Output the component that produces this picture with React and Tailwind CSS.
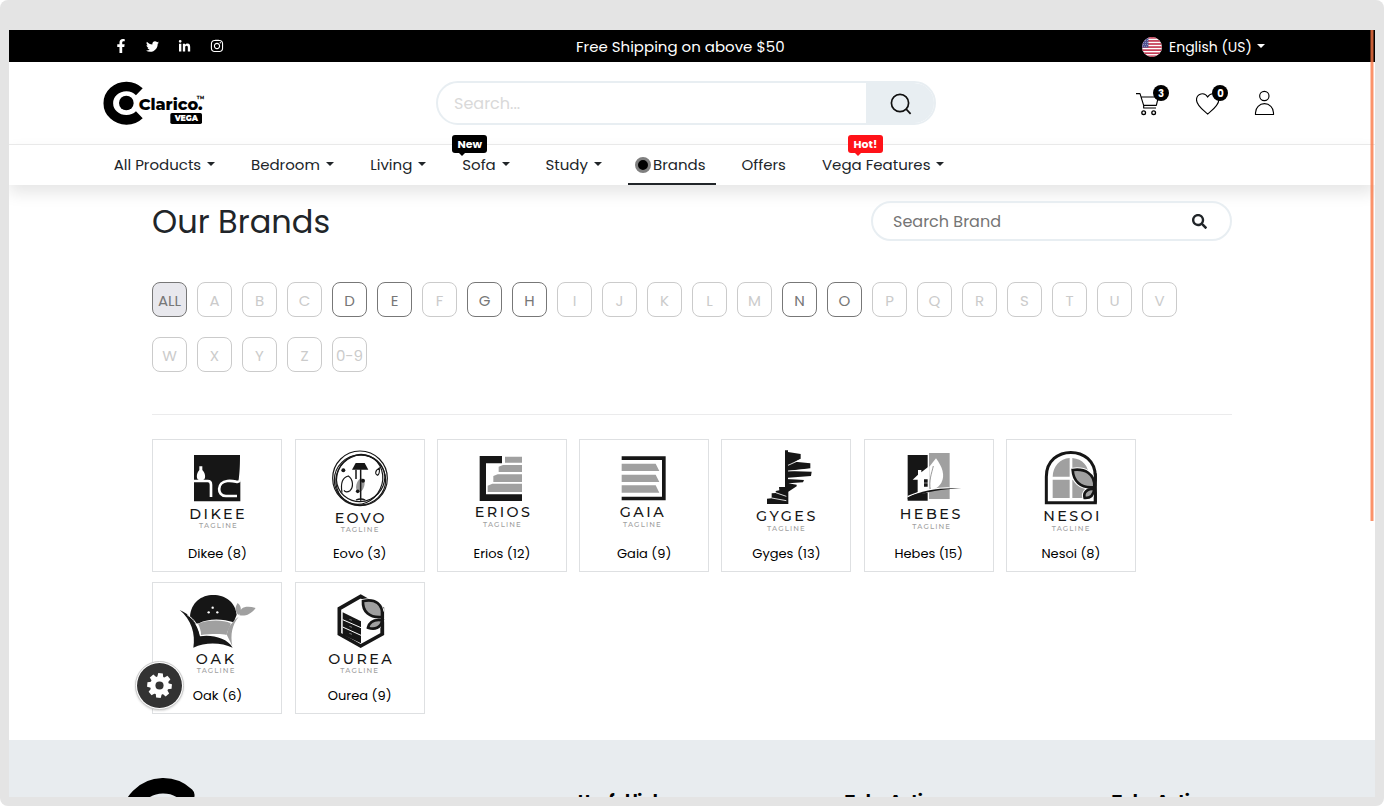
import React from "react";
import { FaFacebookF, FaTwitter, FaLinkedinIn, FaInstagram, FaSearch } from "react-icons/fa";

const INK = "#161616";
const GREY = "#a0a0a0";

function Caret() {
  return (
    <span className="mt-[-2px] block h-0 w-0 shrink-0 border-x-4 border-t-4 border-x-transparent border-t-current" />
  );
}

function ClaricoLogo() {
  return (
    <svg className="h-[46px] w-[104px]" viewBox="306 240 312 138">
      <path d="M418 275A54 50 0 1 0 418 344" fill="none" stroke="#000" strokeWidth="29" strokeLinejoin="round" />
      <circle cx="379" cy="309" r="22" />
      <text x="416" y="330" fontFamily="Montserrat, Poppins, sans-serif" fontWeight="800" fontSize="50" textLength="192" lengthAdjust="spacingAndGlyphs">
        Clarico.
      </text>
      <text x="590" y="306" fontFamily="Montserrat, Poppins, sans-serif" fontWeight="700" fontSize="26" textLength="24" lengthAdjust="spacingAndGlyphs">
        ™
      </text>
      <rect x="511" y="339" width="95" height="33" rx="5" />
      <text x="524" y="364" fill="#fff" fontFamily="Montserrat, Poppins, sans-serif" fontWeight="900" fontSize="25" textLength="70" lengthAdjust="spacingAndGlyphs">
        VEGA
      </text>
    </svg>
  );
}

function Flag() {
  return (
    <svg className="h-5 w-5" viewBox="0 0 20 20">
      <clipPath id="flagClip">
        <circle cx="10" cy="10" r="10" />
      </clipPath>
      <g clipPath="url(#flagClip)">
        <rect width="20" height="20" fill="#fff" />
        {[0, 1, 2, 3, 4, 5, 6].map((i) => (
          <rect key={i} y={i * 3.07} width="20" height="1.7" fill="#c43a54" />
        ))}
        <rect width="6.4" height="10.6" fill="#4f5190" />
        <path d="M1 3.5h5M1 5.5h5M1 7.5h5M3 1.5h3M0 9.3h5" stroke="#a9a9cf" strokeWidth=".7" strokeDasharray="1 1" />
      </g>
    </svg>
  );
}

function TopBar() {
  return (
    <div className="flex h-8 shrink-0 items-center bg-black text-white">
      <div className="ml-[105px] flex w-[462px] items-center">
        <FaFacebookF className="h-[14px] w-[14px]" />
        <FaTwitter className="ml-[18px] h-[13px] w-[13px]" />
        <FaLinkedinIn className="ml-[19px] h-[13px] w-[13px]" />
        <FaInstagram className="ml-[19px] h-[14px] w-[14px]" />
      </div>
      <div className="w-[566px] pt-[2px] text-[15px]">Free Shipping on above $50</div>
      <div className="flex items-center pt-[2px]">
        <Flag />
        <span className="ml-[7px] w-[88px] text-[14px] whitespace-nowrap">English (US)</span>
        <Caret />
      </div>
    </div>
  );
}

function Header() {
  return (
    <div className="flex h-[82px] shrink-0 items-center">
      <div className="ml-[93px] w-[334px]">
        <ClaricoLogo />
      </div>
      <div className="flex h-11 w-[500px] overflow-hidden rounded-full border-2 border-[#e8eef2]">
        <div className="flex flex-1 items-center pt-[2px] pl-4 text-[16px] text-[#d9d9d9]">Search...</div>
        <div className="flex w-[68px] items-center justify-center bg-[#e8eef2] pt-px pl-[2px]">
          <svg className="h-[22px] w-[22px]" viewBox="0 0 22 22" fill="none" stroke="#111" strokeWidth="1.7">
            <circle cx="10" cy="10" r="8.6" />
            <path d="M16.2 16.2L20.6 20.800" />
          </svg>
        </div>
      </div>
      <div className="ml-[200px] flex items-center">
        <div className="relative">
          <svg className="h-[30px] w-6" viewBox="588 264 72 90" fill="none" stroke="#000" strokeWidth="3.4">
            <path d="M588 281H600L611 316H649L655 291H603M611 316V324H648" strokeLinejoin="round" />
            <circle cx="611" cy="338" r="5.500" strokeWidth="4" />
            <circle cx="641" cy="338" r="5.500" strokeWidth="4" />
          </svg>
          <span className="absolute top-[-3px] left-[17px] flex h-4 w-4 items-center justify-center rounded-full bg-black text-[10px] font-bold text-white">
            3
          </span>
        </div>
        <div className="relative ml-9">
          <svg className="h-[30px] w-6" viewBox="768 264 72 90" fill="none" stroke="#000" strokeWidth="3.4">
            <path d="M803 342C790 331 769 317 769.500 299C770 281 793 274 803 291C813 274 836 281 836.500 299C837 317 816 331 803 342Z" />
          </svg>
          <span className="absolute top-[-3px] left-[16.4px] flex h-4 w-4 items-center justify-center rounded-full bg-black text-[10px] font-bold text-white">
            0
          </span>
        </div>
        <svg className="ml-[34px] h-[30px] w-[21px]" viewBox="942 264 63 90" fill="none" stroke="#000" strokeWidth="3.4">
          <circle cx="973" cy="288" r="14" />
          <path d="M946.500 343.500V338A27 27 0 0 1 1000.500 338V343.500Z" />
        </svg>
      </div>
    </div>
  );
}

function NavItem({ label, width, spacing, caret = true, children }) {
  return (
    <div className={`relative flex items-center ${spacing}`}>
      {children}
      <span className={`whitespace-nowrap ${width}`}>{label}</span>
      {caret && (
        <span className="ml-[6px]">
          <Caret />
        </span>
      )}
    </div>
  );
}

function Tag({ text, box, tail }) {
  return (
    <span className={`absolute top-[-10px] flex h-[18px] w-[35px] items-center justify-center rounded-[3px] text-[11px] font-bold text-white ${box}`}>
      {text}
      <span className={`absolute top-[18px] left-[7px] border-x-[3px] border-t-[3px] border-x-transparent ${tail}`} />
    </span>
  );
}

function Nav() {
  return (
    <div className="flex h-[41px] shrink-0 items-stretch border-t border-[#e9e9e9] bg-white pl-[104.7px] text-[15px] text-[#212529] shadow-[0_8px_16px_rgba(0,0,0,0.1)]">
      <NavItem label="All Products" width="w-[87px]" spacing="" />
      <NavItem label="Bedroom" width="w-[69px]" spacing="ml-[36.3px]" />
      <NavItem label="Living" width="w-[42px]" spacing="ml-[36.3px]" />
      <NavItem label="Sofa" width="w-[33.7px]" spacing="ml-9">
        <Tag text="New" box="left-[-10px] bg-black" tail="border-t-black" />
      </NavItem>
      <NavItem label="Study" width="w-[42.5px]" spacing="ml-[35.5px]" />
      <div className="ml-[26px] flex w-[88px] items-center border-b-2 border-[#212529] pt-[2px] pl-[7px]">
        <span className="h-4 w-4 rounded-full border-[3px] border-[#808080] bg-black" />
        <span className="ml-[2px] whitespace-nowrap">Brands</span>
      </div>
      <NavItem label="Offers" width="w-[44.5px]" spacing="ml-[25.5px]" caret={false} />
      <NavItem label="Vega Features" width="w-[108px]" spacing="ml-9">
        <Tag text="Hot!" box="left-[26px] bg-[#ff1218]" tail="border-t-[#ff1218]" />
      </NavItem>
    </div>
  );
}

const LETTERS = ["ALL", ..."ABCDEFGHIJKLMNOPQRSTUVWXYZ".split(""), "0-9"];
const ACTIVE = ["D", "E", "G", "H", "N", "O"];

function LetterFilter() {
  return (
    <div className="mt-10 flex w-[1030px] flex-wrap gap-x-[10px] gap-y-5 text-[15px]">
      {LETTERS.map((l) => {
        const tone =
          l === "ALL"
            ? "border-[#777] bg-[#e8e8ed] text-[#777]"
            : ACTIVE.includes(l)
              ? "border-[#777] text-[#777]"
              : "border-[#cbcbcb] text-[#cbcbcb]";
        return (
          <div key={l} className={`flex h-[35px] w-[35px] items-center justify-center rounded-lg border pt-[3px] whitespace-nowrap ${tone}`}>
            {l}
          </div>
        );
      })}
    </div>
  );
}

function Wordmark({ name, x, y, w, tx, ty }) {
  return (
    <>
      <text x={x} y={y} fill={INK} fontFamily="Montserrat, Poppins, sans-serif" fontWeight="500" fontSize="43" textLength={w}>
        {name}
      </text>
      <text x={tx} y={ty} fill={GREY} fontFamily="Montserrat, Poppins, sans-serif" fontWeight="500" fontSize="21" textLength="113">
        TAGLINE
      </text>
    </>
  );
}

const BRANDS = [
  {
    name: "Dikee", count: 8, box: "39 30 384 300",
    art: (
      <>
        <path d="M162 75H300C300 110 299 125 296 150H301V214H162Z" fill={INK} />
        <path d="M162 153H203Q213 153 213 164V201M300 150Q298 157 288 155Q275 152 262 153C230 156 230 198 258 198H291" fill="none" stroke="#fff" strokeWidth="8" />
        <path d="M178 109H187V120C198 131 198 150 188 150H178C168 150 168 131 178 120Z" fill="#fff" />
        <Wordmark name="DIKEE" x={148} y={266} w={166} tx={177} ty={293} />
      </>
    ),
  },
  {
    name: "Eovo", count: 3, box: "468 30 384 300",
    art: (
      <>
        <g fill="none" stroke={INK} strokeWidth="3.500">
          <circle cx="660" cy="145" r="82" />
          <ellipse cx="660" cy="150" rx="77" ry="75" />
          <ellipse cx="658" cy="148" rx="69" ry="76" transform="rotate(25 658 148)" />
          <ellipse cx="662" cy="145" rx="73" ry="69" transform="rotate(-25 662 145)" />
          <path d="M606 188C602 165 606 143 625 138C640 148 641 171 630 182Q618 190 612 181" />
          <path d="M712 136C704 132 705 122 718 114C719 125 718 134 712 136" />
        </g>
        <ellipse cx="661" cy="166" rx="12" ry="21" fill="#999" transform="rotate(15 661 166)" />
        <path d="M647 99H674L685 119H636Z" fill={INK} />
        <path d="M662 118V212M648 119V147" stroke={INK} strokeWidth="4.500" fill="none" />
        <path d="M648 210Q662 204 676 210" stroke={INK} strokeWidth="4" fill="none" />
        <circle cx="610" cy="121" r="6" fill={INK} />
        <circle cx="669" cy="152" r="6" fill={INK} />
        <circle cx="653" cy="184" r="5.500" fill={INK} />
        <Wordmark name="EOVO" x={584} y={278} w={150} tx={602} ty={305} />
      </>
    ),
  },
  {
    name: "Erios", count: 12, box: "25 30 384 300",
    art: (
      <>
        <path d="M217 78V100H169V193H277V213H150V78Z" fill={INK} />
        <path d="M226 80H277V98H226ZM207 110L220 105H277V126H207ZM191 138L204 133H277V156H191ZM174 167L188 161H277V186H174Z" fill={GREY} />
        <Wordmark name="ERIOS" x={135} y={262} w={166} tx={160} ty={290} />
      </>
    ),
  },
  {
    name: "Gaia", count: 9, box: "451 30 384 300",
    art: (
      <>
        <path d="M576 79H708V211H576V200H697V90H576Z" fill={INK} />
        <path d="M576 101H678L689 123H576ZM576 134H678L689 156H576ZM576 166H678L689 188H576Z" fill={GREY} />
        <Wordmark name="GAIA" x={570} y={262} w={132} tx={580} ty={290} />
      </>
    ),
  },
  {
    name: "Gyges", count: 13, box: "21 30 384 300",
    art: (
      <>
        <path d="M210 61H219V66L257 72V86L221 104L240 95L286 100V115L219 123L290 125L288 138L219 143V147L267 150L264 157L220 160L245 164V169L220 185V222H156V206L170 205V190L183 189L182 183L193 181L192 171H210Z" fill={INK} />
        <path d="M219 106L257 89M219 123L286 118M219 146L268 145M170 204L214 212M182 188L214 199" stroke="#fff" strokeWidth="2.500" />
        <Wordmark name="GYGES" x={123} y={274} w={178} tx={156} ty={302} />
      </>
    ),
  },
  {
    name: "Hebes", count: 15, box: "450 30 384 300",
    art: (
      <>
        <path d="M578 75H638V212H578Z" fill={INK} />
        <path d="M642 69H704V207H642Z" fill={GREY} />
        <path d="M593 149L609 134V120H619V127L642 109V188L608 191V149Z" fill="#fff" />
        <path d="M643 181V110L663 85C682 111 691 136 679 158C670 173 657 179 643 181Z" fill="#fff" />
        <path d="M646 180C641 151 650 130 655 108" fill="none" stroke="#666" strokeWidth="2" />
        <path d="M627 148H638V158H627ZM627 160H638V170H627Z" fill={INK} />
        <path d="M578 200C620 179 675 173 704 174" fill="none" stroke="#fff" strokeWidth="4" />
        <path d="M578 203C620 180 675 172 739 175C680 179 638 182 578 208Z" fill={INK} />
        <Wordmark name="HEBES" x={554} y={268} w={182} tx={592} ty={296} />
      </>
    ),
  },
  {
    name: "Nesoi", count: 8, box: "876 30 384 300",
    art: (
      <>
        <path d="M994 218V140C994 43 1141 43 1141 140V218Z" fill="#fff" stroke={INK} strokeWidth="9" />
        <path d="M1013 140C1014 109 1034 86 1064 84V140ZM1072 84C1104 87 1120 108 1123 140H1072ZM1013 149H1064V204H1013ZM1072 149H1123V204H1072Z" fill={GREY} />
        <path d="M1073 120C1108 115 1140 130 1138 171C1094 176 1075 151 1073 120ZM1138 176C1116 176 1104 187 1109 204C1127 205 1136 196 1138 176Z" fill={GREY} stroke="#fff" strokeWidth="14" />
        <path d="M1073 120C1108 115 1140 130 1138 171C1094 176 1075 151 1073 120ZM1138 176C1116 176 1104 187 1109 204C1127 205 1136 196 1138 176Z" fill={GREY} stroke={INK} strokeWidth="8" />
        <path d="M1141 130V218" stroke={INK} strokeWidth="9" />
        <Wordmark name="NESOI" x={985} y={273} w={168} tx={1010} ty={302} />
      </>
    ),
  },
  {
    name: "Oak", count: 6, box: "69 24 384 300",
    art: (
      <>
        <path d="M180 126C183 82 214 60 250 60C286 60 317 82 320 119L311 142C280 131 235 129 207 145L196 146Z" fill={INK} />
        <path d="M204 146C236 133 280 134 302 145C302 155 292 165 290 180C272 175 235 178 213 180C213 165 209 157 204 146Z" fill={GREY} />
        <path d="M149 105C178 116 202 145 210 184C245 178 292 189 308 218C275 203 228 200 190 218C197 178 184 133 149 105Z" fill={INK} />
        <path d="M326 125C298 146 291 166 291 181L307 213C301 177 306 151 326 125ZM325 120C312 105 317 94 323 84C337 96 334 110 325 120ZM328 121C328 96 348 91 377 99C362 119 346 124 328 121Z" fill={GREY} />
        <path d="M172 120C192 132 205 150 212 181" fill="none" stroke="#fff" strokeWidth="3" />
        <g fill="#fff">
          <circle cx="248" cy="98" r="3.500" />
          <circle cx="236" cy="112" r="3.500" />
          <circle cx="262" cy="112" r="3.500" />
        </g>
        <Wordmark name="OAK" x={197} y={266} w={115} tx={200} ty={294} />
      </>
    ),
  },
  {
    name: "Ourea", count: 9, box: "498 24 384 300",
    art: (
      <>
        <path d="M692 64L757 101V177L692 213L628 177V101Z" fill="#fff" stroke={INK} strokeWidth="11" />
        <path d="M638 112L693 139V205L638 179Z" fill={INK} />
        <path d="M638 134L693 158M638 156L693 181" stroke="#fff" strokeWidth="3" />
        <path d="M658 133l8 3M658 154l8 3M658 175l8 3" stroke="#aaa" strokeWidth="2" />
        <path d="M699 78C735 70 760 86 757 126C717 130 697 108 699 78ZM758 136C733 132 718 141 714 158C735 166 751 158 758 136Z" fill={GREY} stroke="#fff" strokeWidth="13" />
        <path d="M699 78C735 70 760 86 757 126C717 130 697 108 699 78ZM758 136C733 132 718 141 714 158C735 166 751 158 758 136Z" fill={GREY} stroke={INK} strokeWidth="8" />
        <path d="M757 110V179" stroke={INK} strokeWidth="10" />
        <Wordmark name="OUREA" x={595} y={266} w={190} tx={631} ty={295} />
      </>
    ),
  },
];

function BrandGrid() {
  return (
    <div className="mt-[24.2px] ml-[0.45px] flex flex-wrap gap-x-[12.25px] gap-y-[10px]">
      {BRANDS.map((b) => (
        <div key={b.name} className="flex h-[132.5px] w-[130px] flex-col items-center border border-[#dee0e2]">
          <svg className="h-[100px] w-[128px] shrink-0" viewBox={b.box}>
            {b.art}
          </svg>
          <div className="mt-[3.5px] text-[13px] leading-5 whitespace-nowrap text-black">
            {b.name} ({b.count})
          </div>
        </div>
      ))}
    </div>
  );
}

const COG_TEETH = [0, 45, 90, 135];

function SettingsButton() {
  return (
    <div className="absolute top-[631px] left-[125.5px] flex h-[49px] w-[49px] items-center justify-center rounded-full border border-[#c8c8c8] bg-white shadow-[0_1px_2px_rgba(0,0,0,0.15)]">
      <div className="flex h-[45px] w-[45px] items-center justify-center rounded-full bg-[#333]">
        <svg className="h-[25px] w-[25px]" viewBox="-12 -12 24 24" fill="#fff">
          {COG_TEETH.map((a) => (
            <path key={a} d="M-2.900 -8L-2.200 -11.800H2.200L2.900 -8V8L2.200 11.800H-2.200L-2.900 8Z" transform={`rotate(${a + 5})`} />
          ))}
          <circle r="9" />
          <circle r="3.900" fill="#333" />
        </svg>
      </div>
    </div>
  );
}

function Footer() {
  return (
    <div className="flex h-[57px] shrink-0 overflow-hidden bg-[#e8ecef] text-[17px] font-bold text-black">
      <svg className="mt-[36px] ml-[115px] h-[96px] w-[454px] shrink-0" viewBox="0 0 454 96">
        <path d="M62.800 19.100A34.500 34.500 0 1 0 62.800 69.500" fill="none" stroke="#000" strokeWidth="15.500" strokeLinecap="round" />
      </svg>
      <div className="mt-[49px] w-[267px] shrink-0 leading-6 tracking-[-0.5px]">Useful links</div>
      <div className="mt-[49px] w-[267px] shrink-0 leading-6 tracking-[-0.4px]">Take Action</div>
      <div className="mt-[49px] shrink-0 leading-6 tracking-[-0.4px]">Take Action</div>
    </div>
  );
}

export default function App() {
  return (
    <div className="h-[806px] w-[1384px] overflow-hidden rounded-lg bg-[#e4e4e4] px-[9px] pt-[30px] pb-[9px] font-['Poppins',Inter,sans-serif]">
      <div className="relative flex h-full flex-col overflow-hidden bg-white">
        <TopBar />
        <Header />
        <Nav />
        <main className="h-[555px] shrink-0 pr-[143px] pl-[143px]">
          <div className="flex items-start justify-between pt-4">
            <h1 className="pt-[1px] text-[32px] leading-10 whitespace-nowrap text-[#212529]">Our Brands</h1>
            <div className="flex h-10 w-[361px] items-center justify-between rounded-full border-2 border-[#e8eef2] pr-[23px] pl-5 text-[16px] text-[#757575]">
              <span className="pt-[2px]">Search Brand</span>
              <FaSearch className="h-[15px] w-[15px] text-[#212529]" />
            </div>
          </div>
          <LetterFilter />
          <div className="mt-[42px] border-t border-[#ebebec]" />
          <BrandGrid />
        </main>
        <Footer />
        <SettingsButton />
        <div className="absolute top-0 right-[1px] flex h-[491px] w-1">
          <div className="w-px bg-[rgba(250,119,69,0.4)]" />
          <div className="w-[2px] bg-[rgba(250,119,69,0.8)]" />
          <div className="w-px bg-[rgba(250,119,69,0.4)]" />
        </div>
      </div>
    </div>
  );
}
